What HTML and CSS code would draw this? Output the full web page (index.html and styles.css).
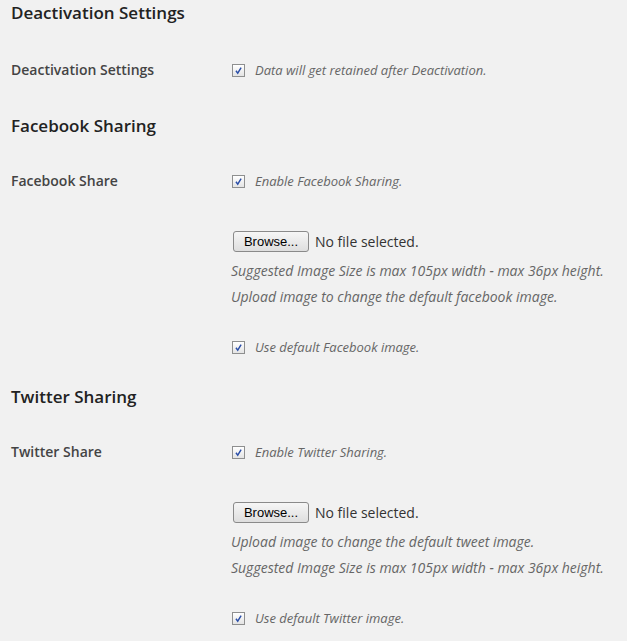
FILE: index.html
```html
<!DOCTYPE html>
<html lang="en">
  <head>
    <meta charset="UTF-8" />
    <meta name="viewport" content="width=device-width, initial-scale=1.0" />
    <title>Sharing Settings</title>
    <link rel="stylesheet" href="styles.css">
  </head>
  <body>
    <div class="wrap">
      <div class="section first">
        <h3>Deactivation Settings</h3>
        <div class="row">
          <div class="label">Deactivation Settings</div>
          <div class="field">
            <label class="check">
              <span class="box"><svg viewBox="0 0 13 13"><path d="M3.5 6.8 L5.6 9.6 L9.6 3.2" /></svg></span>
              <span class="description">Data will get retained after Deactivation.</span>
            </label>
          </div>
        </div>
      </div>

      <div class="section">
        <h3>Facebook Sharing</h3>
        <div class="row">
          <div class="label">Facebook Share</div>
          <div class="field">
            <label class="check">
              <span class="box"><svg viewBox="0 0 13 13"><path d="M3.5 6.8 L5.6 9.6 L9.6 3.2" /></svg></span>
              <span class="description">Enable Facebook Sharing.</span>
            </label>
            <div class="file">
              <button class="browse">Browse...</button>
              <span class="filename">No file selected.</span>
            </div>
            <p class="description notes">Suggested Image Size is max 105px width - max 36px height.<br>Upload image to change the default facebook image.</p>
            <label class="check last">
              <span class="box"><svg viewBox="0 0 13 13"><path d="M3.5 6.8 L5.6 9.6 L9.6 3.2" /></svg></span>
              <span class="description">Use default Facebook image.</span>
            </label>
          </div>
        </div>
      </div>

      <div class="section">
        <h3>Twitter Sharing</h3>
        <div class="row">
          <div class="label">Twitter Share</div>
          <div class="field">
            <label class="check">
              <span class="box"><svg viewBox="0 0 13 13"><path d="M3.5 6.8 L5.6 9.6 L9.6 3.2" /></svg></span>
              <span class="description">Enable Twitter Sharing.</span>
            </label>
            <div class="file">
              <button class="browse">Browse...</button>
              <span class="filename">No file selected.</span>
            </div>
            <p class="description notes">Upload image to change the default tweet image.<br>Suggested Image Size is max 105px width - max 36px height.</p>
            <label class="check last">
              <span class="box"><svg viewBox="0 0 13 13"><path d="M3.5 6.8 L5.6 9.6 L9.6 3.2" /></svg></span>
              <span class="description">Use default Twitter image.</span>
            </label>
          </div>
        </div>
      </div>
    </div>
  </body>
</html>
```

FILE: styles.css
```css
body {
  margin: 0;
  background: #f1f1f1;
  font-family: "Open Sans", sans-serif;
  color: #444;
}
.wrap {
  padding: 0 11px;
}
.section {
  padding-bottom: 27px;
}
.section.first {
  padding-bottom: 33px;
}
h3 {
  margin: 0;
  font-size: 17px;
  line-height: 26px;
  font-weight: 600;
  color: #222;
}
.row {
  display: flex;
  margin-top: 32px;
}
.first .row {
  margin-top: 34px;
}
.label {
  width: 221px;
  flex-shrink: 0;
  font-size: 14px;
  line-height: 20px;
  font-weight: 600;
  color: #444;
}
.field {
  flex: 1;
}
.check {
  display: flex;
  align-items: center;
  height: 20px;
  gap: 10px;
}
.check.last {
  margin-top: 27px;
}
.box {
  width: 11px;
  height: 11px;
  border: 1px solid #8e8f8f;
  background: linear-gradient(#ffffff, #e4e4e4);
  display: flex;
}
.box svg {
  width: 11px;
  height: 11px;
}
.box path {
  fill: none;
  stroke: #2a4ea8;
  stroke-width: 1.7;
}
.description {
  font-size: 13px;
  font-style: italic;
  color: #666;
}
.file {
  display: flex;
  align-items: center;
  gap: 6px;
  margin-top: 39px;
  height: 22px;
}
.browse {
  height: 21px;
  width: 76px;
  margin-left: 1px;
  padding: 0;
  border: 1px solid #8a8a8a;
  border-radius: 3px;
  background: linear-gradient(#f6f6f6, #dedede);
  font-family: "Liberation Sans", Arial, sans-serif;
  font-size: 13px;
  color: #000;
}
.filename {
  font-size: 14px;
  color: #333;
}
.notes {
  margin: 6px 0 0 -1px;
  font-size: 14px;
  line-height: 26px;
}
```
